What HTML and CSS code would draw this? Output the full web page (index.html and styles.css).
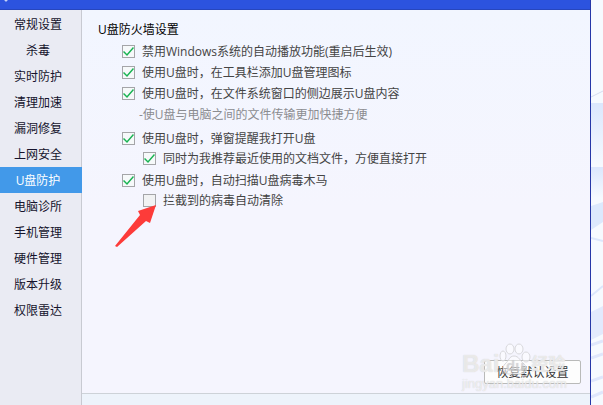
FILE: index.html
```html
<!DOCTYPE html>
<html lang="zh-CN">

<head>
    <meta charset="UTF-8">
    <meta name="viewport" content="width=device-width, initial-scale=1.0">
    <title>U盘防护</title>
    <link rel="stylesheet" href="styles.css">
</head>

<body>
    <div class="window">
        <div class="titlebar"></div>
        <div class="main">
            <nav class="menu">
                <a href="#">常规设置</a>
                <a href="#">杀毒</a>
                <a href="#">实时防护</a>
                <a href="#">清理加速</a>
                <a href="#">漏洞修复</a>
                <a href="#">上网安全</a>
                <a href="#" class="active">U盘防护</a>
                <a href="#">电脑诊所</a>
                <a href="#">手机管理</a>
                <a href="#">硬件管理</a>
                <a href="#">版本升级</a>
                <a href="#">权限雷达</a>
            </nav>
            <div class="panel">
                <div class="content">
                    <h1>U盘防火墙设置</h1>
                    <div class="options">
                        <label><input type="checkbox" checked>禁用Windows系统的自动播放功能(重启后生效)</label>
                        <label><input type="checkbox" checked>使用U盘时，在工具栏添加U盘管理图标</label>
                        <label><input type="checkbox" checked>使用U盘时，在文件系统窗口的侧边展示U盘内容</label>
                        <p class="note">-使U盘与电脑之间的文件传输更加快捷方便</p>
                        <label><input type="checkbox" checked>使用U盘时，弹窗提醒我打开U盘</label>
                        <label class="sub"><input type="checkbox" checked>同时为我推荐最近使用的文档文件，方便直接打开</label>
                        <label><input type="checkbox" checked>使用U盘时，自动扫描U盘病毒木马</label>
                        <label class="sub"><input type="checkbox">拦截到的病毒自动清除</label>
                    </div>
                    <button type="button" class="reset">恢复默认设置</button>
                </div>
                <div class="footer"></div>
            </div>
        </div>
    </div>
    <div class="desktop">
        <svg viewBox="0 0 12 405" preserveAspectRatio="none">
            <defs>
                <linearGradient id="fade" x1="0" y1="0" x2="0" y2="1">
                    <stop offset="0" stop-color="#dbe7fd" />
                    <stop offset="1" stop-color="#f6faff" />
                </linearGradient>
            </defs>
            <path d="M0 97L12 91" stroke="#d5dcf0" fill="none" />
            <path d="M0 103H12V166H0z" fill="url(#fade)" />
            <path d="M0 167H12V198H0z" fill="url(#fade)" />
            <path d="M0 206L12 202V222L0 230z" fill="#dce9fd" />
            <path d="M0 238L12 241M0 296L12 286" stroke="#dce7fc" stroke-width="2" fill="none" />
            <path d="M0 312L12 306V334L0 340z" fill="#e2eafd" />
            <path d="M0 345L12 341M0 358L12 354M0 381L12 377M0 397L12 392" stroke="#dfe7fc" stroke-width="3" fill="none" />
        </svg>
    </div>

    <!-- 红色箭头 -->
    <svg class="arrow" viewBox="0 0 42 42">
        <path d="M0 41L25 10L23 6L41 0L35 18L31 16L2 42z" fill="#fd3b39" />
    </svg>

    <!-- 水印 -->
    <div class="watermark">
        <div class="brand">
            <span>Bai</span>
            <svg viewBox="0 0 32 32">
                <ellipse cx="4" cy="13" rx="3" ry="5" />
                <ellipse cx="11" cy="6" rx="4" ry="5" />
                <ellipse cx="20" cy="6" rx="4" ry="5" />
                <ellipse cx="27" cy="14" rx="4" ry="5" />
                <path d="M15 13C10 13 10 18 6 21C2 25 5 31 10 31L21 31C28 31 29 25 25 21C21 18 20 13 15 13z" />
                <text x="7" y="28">du</text>
            </svg>
            <span class="cn">经验</span>
        </div>
        <div class="site">jingyan.baidu.com</div>
    </div>
</body>

</html>
```
FILE: styles.css
```css
* {
    margin: 0;
    padding: 0;
    box-sizing: border-box;
}

body {
    position: relative;
    display: flex;
    min-height: 100vh;
    overflow: hidden;
    font: 12px/20px "Open Sans", "Noto Sans CJK SC", sans-serif;
    color: #444;
}

.window {
    flex: 1;
    display: flex;
    flex-direction: column;
    border-right: 1px solid #2638a8;
}

.titlebar {
    height: 10px;
    background: radial-gradient(circle at 6px 0, #c5d2f8 1px, transparent 2px) #2c53df;
    border-bottom: 1px solid #2746bd;
}

.main {
    flex: 1;
    display: flex;
}

.menu {
    width: 82px;
    padding-top: 1px;
    background: #eaebf3;
    border-right: 1px solid #c8cad2;
}

.menu a {
    display: block;
    margin-right: -1px;
    padding: 2px 6px 0 0;
    line-height: 24px;
    text-align: center;
    text-decoration: none;
    color: #15132c;
}

.menu a.active {
    background: #4299e9;
    color: #fff;
}

.panel {
    flex: 1;
    display: flex;
    flex-direction: column;
    background: linear-gradient(#f2f6ff, #f5f5fe 50%);
}

.content {
    flex: 1;
    display: flex;
    flex-direction: column;
    padding: 9px 9px 9px 16px;
}

h1 {
    line-height: 22px;
    font-size: 12px;
    font-weight: normal;
    color: #000;
}

.options {
    padding-left: 24px;
}

.options label {
    display: flex;
    align-items: center;
    gap: 7px;
    height: 21px;
}

.options .sub {
    padding: 0 0 2px 21px;
}

.note {
    height: 24px;
    padding-left: 17px;
    line-height: 22px;
    color: #8b8c90;
}

input[type="checkbox"] {
    appearance: none;
    width: 13px;
    height: 13px;
    border: 1px solid #a4a5a8;
    background: #f1f2f3;
}

input[type="checkbox"]:checked {
    background: #f6f9fa url("data:image/svg+xml,%3Csvg xmlns='http://www.w3.org/2000/svg' viewBox='0 0 11 11'%3E%3Cpath d='M0.5 5.5L4 9L10.5 1.5' fill='none' stroke='%2318b352' stroke-width='1.5'/%3E%3C/svg%3E");
}

.reset {
    align-self: flex-end;
    width: 97px;
    height: 24px;
    padding-top: 2px;
    margin-top: auto;
    border: 1px solid #b9bab9;
    border-radius: 2px;
    background: #fdfdfd;
    font: inherit;
    color: #333;
}

.footer {
    height: 12px;
    border-top: 1px solid #cdd2d8;
    background: #edf3fb;
}

.desktop {
    display: flex;
    width: 12px;
    background: #f6faff;
}

.desktop svg {
    width: 100%;
}

.arrow {
    position: absolute;
    left: 115px;
    top: 205px;
    width: 42px;
    height: 42px;
}

.watermark {
    position: absolute;
    right: 35px;
    bottom: 14px;
    width: 106px;
    color: rgba(255, 255, 255, 0.6);
    text-shadow: 0 0 1px #c8c8c8;
    pointer-events: none;
}

.brand {
    display: flex;
    align-items: flex-end;
    height: 35px;
    font: bold 24px/26px "Liberation Sans", sans-serif;
}

.brand svg {
    width: 32px;
    height: 32px;
    margin-bottom: 2px;
    fill: rgba(255, 255, 255, 0.5);
    stroke: #d8d8dc;
    stroke-width: 1px;
}

.brand text {
    fill: rgba(200, 200, 204, 0.5);
    stroke: none;
    font-size: 15px;
}

.brand .cn {
    font: bold 17px/28px "Noto Sans CJK SC", sans-serif;
}

.site {
    font: 13px/14px "Liberation Sans", sans-serif;
}
```
